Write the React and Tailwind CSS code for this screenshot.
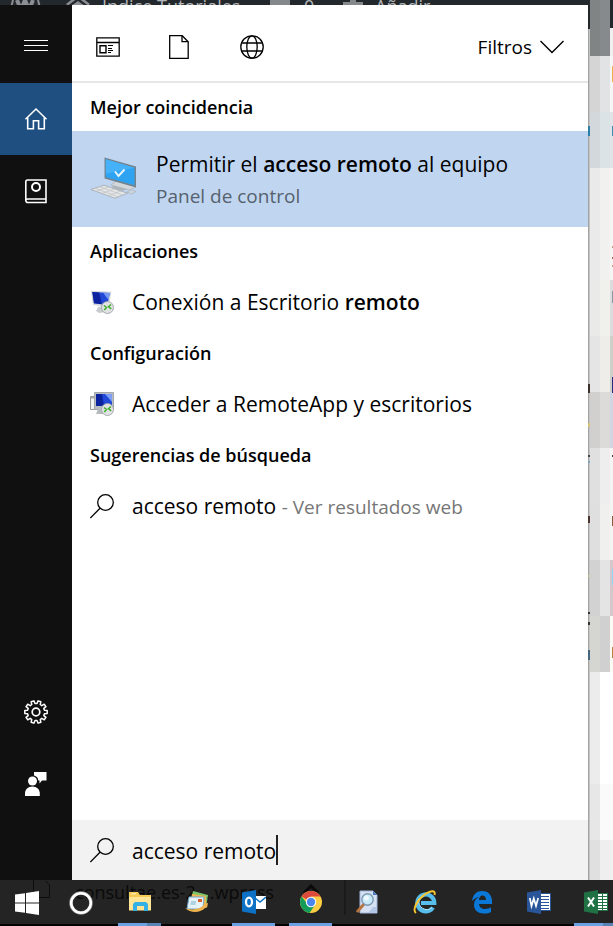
import React, { useState } from "react";

function MenuIcon() {
  return (
    <svg width="24" height="12" viewBox="0 0 24 12" fill="#fff" aria-hidden="true">
      <rect y="0" width="24" height="1" />
      <rect y="5" width="24" height="1" />
      <rect y="10" width="24" height="1" />
    </svg>
  );
}

function HomeIcon() {
  return (
    <svg width="24" height="24" viewBox="0 0 24 24" fill="none" stroke="#fff" strokeWidth="1.6" aria-hidden="true">
      <path d="M1.5 12.2 12 2l10.500 10.200" />
      <path d="M3.700 10.500v11.300h5.700v-8h5.200v8h5.700V10.500" />
    </svg>
  );
}

function NotebookIcon() {
  return (
    <svg width="24" height="26" viewBox="0 0 24 26" fill="none" stroke="#fff" strokeWidth="1.6" aria-hidden="true">
      <path d="M22 21V2H3.500C2.500 2 1.800 2.700 1.800 3.700v18.500c0 1.200.9 2.300 2.200 2.300h18V21H3.800c-1.200 0-2 .6-2 1.500" />
      <circle cx="12" cy="9" r="4" strokeWidth="2" />
    </svg>
  );
}

function gearPath() {
  const teeth = 10;
  const points = [];
  for (let i = 0; i < teeth; i++) {
    const c = (i + 0.5) * ((Math.PI * 2) / teeth);
    [
      [-0.2, 8.6],
      [-0.13, 11.3],
      [0.13, 11.3],
      [0.2, 8.6],
    ].forEach(([a, r]) => {
      points.push(`${(12 + r * Math.sin(c + a)).toFixed(2)} ${(12 - r * Math.cos(c + a)).toFixed(2)}`);
    });
  }
  return `M${points.join("L")}Z`;
}

function GearIcon() {
  return (
    <svg width="24" height="24" viewBox="0 0 24 24" fill="none" stroke="#fff" strokeWidth="1.500" strokeLinejoin="round" aria-hidden="true">
      <path d={gearPath()} />
      <circle cx="12" cy="12" r="3.800" strokeWidth="1.700" />
    </svg>
  );
}

function FeedbackIcon() {
  return (
    <svg width="24" height="26" viewBox="0 0 24 26" fill="#fff" aria-hidden="true">
      <path d="M10 1h12.500v8.500h-4.500L15.500 12.500V9.500h-1.200A5.500 5.500 0 0 0 10 4.500Z" />
      <circle cx="8.500" cy="10" r="4.500" />
      <path d="M1 25v-2.500C1 18.500 4 15.500 8.400 15.500s7.400 3 7.400 7V25Z" />
    </svg>
  );
}

function AppsIcon() {
  return (
    <svg width="24" height="20" viewBox="0 0 24 20" fill="none" stroke="#000" aria-hidden="true">
      <path d="M.8.8h22.400v18.400H.8ZM.8 5.500h22.400" strokeWidth="1.300" />
      <path d="M4 8.700h6v7H4Z" strokeWidth="1.400" />
      <path d="M12 8.500h5M12 11.500h4M12 13.500h5M12 15.500h3" />
    </svg>
  );
}

function PageIcon() {
  return (
    <svg width="20" height="24" viewBox="0 0 20 24" fill="none" stroke="#000" strokeWidth="1.300" aria-hidden="true">
      <path d="M.7.7h12.500l6 6v16.600H.7Z" />
      <path d="M13 .7v6h6" />
    </svg>
  );
}

function GlobeIcon() {
  return (
    <svg width="24" height="24" viewBox="0 0 24 24" fill="none" stroke="#000" strokeWidth="1.300" aria-hidden="true">
      <circle cx="12" cy="12" r="11.200" />
      <ellipse cx="12" cy="12" rx="5.200" ry="11.200" />
      <path d="M1.800 8h20.400M1.800 16h20.400" />
    </svg>
  );
}

function ChevronIcon() {
  return (
    <svg width="24" height="14" viewBox="0 0 24 14" fill="none" stroke="#000" strokeWidth="1.400" aria-hidden="true">
      <path d="m.5 1 11.500 11.500L23.500 1" />
    </svg>
  );
}

function SearchIcon() {
  return (
    <svg className="shrink-0" width="24" height="25" viewBox="0 0 24 25" fill="none" stroke="#000" strokeWidth="1.300" aria-hidden="true">
      <circle cx="15.500" cy="8.500" r="7.800" />
      <path d="m10 14.200-9.700 9.900" />
    </svg>
  );
}

function RemotePcIcon() {
  return (
    <svg width="48" height="44" viewBox="0 0 48 44" aria-hidden="true">
      <path d="m24 25 8 2 1 3 7 1-8 3-10-3Z" fill="#aeb7be" />
      <path d="m21 28 18 5 7-3-2-1-18-5Z" fill="#d4d8db" stroke="#98a1a8" strokeWidth=".5" />
      <path d="m14.500.500 31.500 9v21l-31.500-9Z" fill="#74838e" />
      <path d="m15.800 2.300 28.700 8.400v17.600l-28.700-8Z" fill="#2ea3f2" />
      <path d="m15.800 2.300 28.700 8.400-28.700 6Z" fill="#45b1f9" />
      <path d="m25 14.500 3.500 4.500 6-6.500" fill="none" stroke="#e8f6ff" strokeWidth="1.900" />
      <path d="m.8 32.500 13.200-4.300 23.500 8-12.500 5Z" fill="#e4e5e6" stroke="#9aa1a6" strokeWidth=".7" />
      <path d="m5 31.200 23 8.500M9.500 29.700l23 8.300M6 34.300l13-4.500M12 36.500l13-4.800M18 38.700l13-4.800" fill="none" stroke="#bdc1c4" strokeWidth=".7" />
      <path d="m37 35 4.500-2.300 4.500 1.800-4.500 2.500Z" fill="#cfd6db" stroke="#9aa5ad" strokeWidth=".5" />
    </svg>
  );
}

function RdpBadge() {
  return (
    <>
      <circle cx="17.500" cy="17.500" r="6" fill="#e0e2e4" stroke="#a0a4a8" strokeWidth=".9" />
      <path d="m14 15.500 2.500 2-2.300 2.500M21 14.500l-2.500 2.300 2.700 2" fill="none" stroke="#3fae2a" strokeWidth="1.500" />
    </>
  );
}

function RdpIcon() {
  return (
    <svg width="24" height="24" viewBox="0 0 24 24" aria-hidden="true">
      <path d="m8 17 6-1 2 6-7 1-3-2Z" fill="#c8cdd2" />
      <path d="m1 .8 20.500 1L18.500 17 3 15Z" fill="#d3d7dc" />
      <path d="m2.300 2 17.600 1-2.600 12L4 13.300Z" fill="#2148d6" />
      <path d="m2.300 2 7 .4 2.500 11.900L4 13.300Z" fill="#0c229e" />
      <path d="m13 2.600 6.900.4-1.500 7Z" fill="#7699f2" />
      <RdpBadge />
    </svg>
  );
}

function RemoteAppIcon() {
  return (
    <svg width="24" height="24" viewBox="0 0 24 24" aria-hidden="true">
      <path d="M.5 4.500h8v13h-8Z" fill="#f4f4f4" stroke="#9b9b9b" />
      <path d="M.5 4.500h5v2h-5Z" fill="#aaa" />
      <path d="M4.500.500h19v17h-19Z" fill="#b9bdc2" stroke="#a4a8ac" />
      <path d="M6 2h16v12H6Z" fill="#2148d6" />
      <path d="M6 2h6l2 12H6Z" fill="#0c229e" />
      <path d="M15 2h7v8Z" fill="#7d9ff5" />
      <path d="m8 17-2 5h9v-5Z" fill="#b5babe" />
      <RdpBadge />
    </svg>
  );
}

const taskIcons = {
  start: (
    <svg width="24" height="24" viewBox="0 0 24 24" fill="#fff">
      <path d="m0 3.500 10-1.300v9.300H0ZM11 2l13-2v11.500H11ZM0 12.500h10v9.300L0 20.500ZM11 12.500h13V24l-13-2Z" />
    </svg>
  ),
  cortana: (
    <svg width="24" height="24" viewBox="0 0 24 24" fill="none">
      <circle cx="12" cy="12" r="10" stroke="#8e8e8e" strokeWidth="3.600" />
      <circle cx="12" cy="12" r="9.800" stroke="#fff" strokeWidth="2.500" />
    </svg>
  ),
  explorer: (
    <svg width="24" height="22" viewBox="0 0 24 22">
      <path d="M1 1h9l2 3h11v15H1Z" fill="#f3cb55" />
      <path d="M1 6h22v13.500H1Z" fill="#ffe595" />
      <path d="M3 2.300h5v1H3Z" fill="#fff3c4" />
      <path d="M5 20v-7l2-2h11l2 2v7h-4v-5H9v5Z" fill="#33b1e7" />
    </svg>
  ),
  mail: (
    <svg width="24" height="24" viewBox="0 0 24 24">
      <path d="m8 1 15 4-2 13L5 14Z" fill="#7ec46b" />
      <path d="m7 4 14 2v12H5Z" fill="#f1b654" />
      <path d="M4 7h15l-1 12H2Z" fill="#e4f2fa" stroke="#6ea8cf" />
      <path d="M13 9h4v3h-4Z" fill="#d7622d" />
      <path d="M6 12h5M5.500 14h5" stroke="#7fb0d0" />
      <path d="M0 18c7 3 15 1 19-3l-1-1 5-1-1 5-1-1c-5 6-15 7-21 1Z" fill="#eeb14c" />
    </svg>
  ),
  outlook: (
    <svg width="24" height="24" viewBox="0 0 24 24">
      <path d="M13 6h11v13H13Z" fill="#fff" />
      <path d="m13 8 5 4 6-5" fill="none" stroke="#0d72c6" strokeWidth="1.500" />
      <path d="M0 2.500 14 0v24L0 21.500Z" fill="#0d72c6" />
      <ellipse cx="7" cy="12" rx="3" ry="4.300" fill="none" stroke="#fff" strokeWidth="2.300" />
    </svg>
  ),
  chrome: (
    <svg width="24" height="24" viewBox="0 0 24 24">
      <circle cx="12" cy="12" r="11" fill="#ffcd42" />
      <path d="M12 12 2.500 6.500A11 11 0 0 1 21.500 6.500H12Z" fill="#db4a3c" />
      <path d="M2.500 6.500a11 11 0 0 0 8 16.400L16 15l-4-3-5 0Z" fill="#149c5a" />
      <circle cx="12" cy="12" r="5.200" fill="#fff" />
      <circle cx="12" cy="12" r="4.200" fill="#4a86ec" />
    </svg>
  ),
  finder: (
    <svg width="24" height="24" viewBox="0 0 24 24">
      <path d="M4 1h13l4 4v18H4Z" fill="#d6e1f3" stroke="#9eb4d8" />
      <path d="M17 1v4h4Z" fill="#4575bd" />
      <path d="M17 17h4v6h-9Z" fill="#b4c6e6" />
      <path d="m8 14-7 8" stroke="#b8743e" strokeWidth="2.800" />
      <circle cx="11.500" cy="9.500" r="5.700" fill="#c9eaf8" stroke="#7d98b0" strokeWidth="1.400" />
      <circle cx="10.500" cy="8" r="2.500" fill="#eefaff" />
    </svg>
  ),
  ie: (
    <svg width="24" height="24" viewBox="0 0 24 24" fill="none">
      <path d="M20 17.500A8.500 8.500 0 1 1 21.300 13H8" stroke="#56bdec" strokeWidth="4.200" />
      <path d="M19 17.500a8 8 0 0 1-13-8" stroke="#b4e7fc" strokeWidth="1" />
      <path d="M3 23C-1 20 4 10 11 5S23 0 21.500 5" stroke="#fbc72f" strokeWidth="1.900" />
    </svg>
  ),
  edge: (
    <svg width="24" height="24" viewBox="0 0 24 24">
      <path d="M2 11C3 4 7 1 12 1c7 0 10 5 10 10v3H9c0 3 3 5 6 5 2.500 0 4.500-.7 6-1.700V22c-2 1-4 1.500-7 1.500-6 0-10-3.500-10-8.500 0-4 2-6.500 5-8-3 .5-5 2-7 4ZM9 10h7c0-3-1.500-4.500-3.500-4.500S9 7.500 9 10Z" fill="#0b78d7" />
    </svg>
  ),
  word: (
    <svg width="24" height="24" viewBox="0 0 24 24">
      <path d="M13 3.500h10.500v17H13Z" fill="#fff" stroke="#2a5699" />
      <path d="M14 6.500h8M14 9.500h8M14 12.500h8M14 15.500h8M14 18.500h8" stroke="#2a5699" />
      <path d="M0 2.500 14 0v24L0 21.500Z" fill="#2a5699" />
      <path d="m2.800 8 1.700 8 2.300-7.500L9 16l2.200-8" fill="none" stroke="#fff" strokeWidth="1.700" />
    </svg>
  ),
  excel: (
    <svg width="24" height="24" viewBox="0 0 24 24">
      <path d="M13 3.500h10.500v17H13Z" fill="#fff" stroke="#207245" />
      <path d="M14 6.500h9M14 9.500h9M14 12.500h9M14 15.500h9M14 18.500h9M18.500 4v16" stroke="#207245" />
      <path d="M0 2.500 14 0v24L0 21.500Z" fill="#207245" />
      <path d="m4 7.500 6 9M10 7.500l-6 9" fill="none" stroke="#fff" strokeWidth="2" />
    </svg>
  ),
};

const pinned = [
  { id: "explorer", label: "Explorador de archivos", state: "stacked" },
  { id: "mail", label: "Correo" },
  { id: "outlook", label: "Outlook", state: "open" },
  { id: "chrome", label: "Chrome", state: "open" },
  { id: "finder", label: "Buscar archivos" },
  { id: "ie", label: "Internet Explorer" },
  { id: "edge", label: "Edge" },
  { id: "word", label: "Word" },
  { id: "excel", label: "Excel", state: "stacked" },
];

function TaskButton({ item }) {
  return (
    <button type="button" aria-label={item.label} className="flex w-[57px] shrink-0 flex-col">
      <span className="flex w-full flex-1 items-center justify-center">{taskIcons[item.id]}</span>
      <span className="flex h-[3px] w-full justify-center">
        {item.state === "open" && <span className="w-[43px] bg-[#6ba1e2]" />}
        {item.state === "stacked" && (
          <>
            <span className="w-[29px] bg-[#6ba1e2]" />
            <span className="w-[14px] bg-[#5783b5]" />
          </>
        )}
      </span>
    </button>
  );
}

function RailButton({ label, active, tall, children }) {
  return (
    <button
      type="button"
      aria-label={label}
      className={`flex w-full items-center justify-center ${tall ? "h-[78px] pt-1" : "h-[72px]"} ${active ? "bg-[#1f4e80]" : ""}`}
    >
      {children}
    </button>
  );
}

function SectionTitle({ children }) {
  return <h2 className="flex h-12 shrink-0 items-center px-[18px] text-[18px] leading-6 font-semibold">{children}</h2>;
}

function ResultRow({ icon, children }) {
  return (
    <a href="#resultado" className="flex h-[54px] shrink-0 items-center gap-[18px] px-[18px] text-[21px] leading-7 whitespace-nowrap">
      <span className="w-6 shrink-0">{icon}</span>
      <span>{children}</span>
    </a>
  );
}

const backdrop = [
  ["h-7", "bg-[#808485]", "bg-[#878a8c]", "bg-[#23282d]"],
  ["h-7", "bg-[#808485]", "bg-[#878a8c]", "bg-[#f0f0f0]"],
  ["h-14", "bg-[#d5d5d5]", "bg-[#e1e3e5]", "bg-[#f6f6f6]"],
  ["h-14", "bg-[#d2d8dc]", "bg-[#dbe3e6]", "bg-[#e0e4e8]"],
  ["h-28", "bg-[#eaeaea]", "bg-[#f1f1f0]", "bg-[#f5f5f5]"],
  ["h-14", "bg-[#eaeae9]", "bg-[#f0f0ed]", "bg-[#dcdcde]"],
  ["h-14", "bg-[#e5e5e5]", "bg-[#eeedea]", "bg-[#cfcfca]"],
  ["h-14", "bg-[#d1d0ce]", "bg-[#dcdbd9]", "bg-[#d2d6e2]"],
  ["h-14", "bg-[#e0e0e1]", "bg-[#eeeeee]", "bg-[#f4f4f4]"],
  ["h-14", "bg-[#dfdfdf]", "bg-[#f0f0ee]", "bg-[#f4f4f4]"],
  ["h-14", "bg-[#d2d2d2]", "bg-[#e5e4e5]", "bg-[#d5c8cc]"],
  ["h-14", "bg-[#d5d5d2]", "bg-[#d0d0d0]", "bg-[#fbfbf6]"],
  ["h-28", "bg-[#ececec]", "bg-white", "bg-white"],
  ["h-14", "bg-[#e7e7e7]", "bg-[#fafafa]", "bg-[#fafafa]"],
  ["flex-1", "bg-[#e0e0e0]", "bg-[#efefef]", "bg-[#f0f0f0]"],
];

const leftFragments = [
  "h-[29px] bg-[#23282d]",
  "mt-[97px] h-[10px] bg-[#2a7fa8]",
  "mt-[248px] h-[9px] bg-[#3a302c]",
  "mt-[30px] h-[4px] bg-[#d8c27a]",
  "mt-[28px] h-[2px] bg-[#444444]",
  "mt-[4px] h-[2px] bg-[#7fa3bd]",
  "mt-[53px] h-[7px] bg-[#4b3530]",
  "mt-[52px] h-[2px] bg-[#c5cc9a]",
  "mt-[35px] h-[2px] bg-[#333333]",
  "mt-[8px] h-[3px] bg-[#333333]",
  "mt-[25px] h-[10px] bg-[#47677f]",
];

const rightFragments = [
  "mt-[66px] h-[16px] bg-[#f0ad4e]",
  "mt-[44px] h-[10px] bg-[#3a8db5]",
  "mt-[110px] h-[2px] bg-[#c9987a]",
  "mt-[9px] h-[2px] bg-[#b0605a]",
  "mt-[6px] h-[2px] bg-[#c9987a]",
  "mt-[24px] h-[12px] bg-[#8a97a5]",
  "mt-[74px] h-[16px] bg-[#2b2e83]",
  "mt-[62px] h-[2px] bg-[#444444]",
  "mt-[59px] h-[10px] bg-[#8a5a3a]",
  "mt-[43px] h-[16px] bg-[#8ed6f5]",
  "mt-[62px] h-[11px] bg-[#b8863a]",
];

export default function App() {
  const [query, setQuery] = useState("acceso remoto");
  return (
    <div className="flex h-screen min-h-[700px] flex-col overflow-hidden bg-white font-['Open_Sans','Noto_Sans',sans-serif] text-black">
      <div className="flex min-h-0 flex-1">
        <div className="flex min-w-0 flex-1 flex-col">
          <div className="flex h-[5px] shrink-0 overflow-hidden bg-[#23282d] text-[18px] leading-5 text-[#b4b7ba]" aria-hidden="true">
            <svg className="ml-2 shrink-0" width="34" height="20" viewBox="0 0 34 20" fill="none" stroke="#8b8f93">
              <path d="M5 0 3 8M30 0l2 8" strokeWidth="2" />
              <path d="m9 0 4 10 4-10 4 10 4-10" strokeWidth="4" />
            </svg>
            <svg className="ml-6 shrink-0" width="24" height="20" viewBox="0 0 24 20" fill="#8b8f93">
              <path d="m0 4 9-7h6l9 7-2 1.500L12-2 2 5.500ZM5 6l7-5 7 5Z" />
            </svg>
            <span className="-mt-1 ml-3 w-[168px] shrink-0 whitespace-nowrap">Índice Tutoriales</span>
            <span className="h-4 w-5 shrink-0 bg-[#85898c]" />
            <span className="-mt-1 ml-[14px] w-6 shrink-0">0</span>
            <svg className="ml-[15px] shrink-0" width="20" height="10" viewBox="0 0 20 10" fill="#85898c">
              <path d="M7 0h6v2h7v6H0V2h7Z" />
            </svg>
            <span className="-mt-1 ml-3 whitespace-nowrap">Añadir</span>
          </div>

          <div className="flex min-h-0 flex-1">
            <nav aria-label="Cortana" className="flex w-[72px] shrink-0 flex-col bg-[#101010] pb-[60px]">
              <RailButton label="Menú" tall><MenuIcon /></RailButton>
              <RailButton label="Inicio" active><HomeIcon /></RailButton>
              <RailButton label="Cuaderno"><NotebookIcon /></RailButton>
              <div className="flex-1" />
              <RailButton label="Configuración"><GearIcon /></RailButton>
              <RailButton label="Comentarios"><FeedbackIcon /></RailButton>
            </nav>

            <main className="flex min-w-0 flex-1 flex-col bg-white">
              <header className="flex h-[78px] shrink-0 items-center border-b-2 border-[#e6e6e6] px-6 pt-2">
                <button type="button" aria-label="Aplicaciones" className="w-[72px]"><AppsIcon /></button>
                <button type="button" aria-label="Documentos" className="w-[72px] pl-[1px]"><PageIcon /></button>
                <button type="button" aria-label="Web" className="w-[72px]"><GlobeIcon /></button>
                <button type="button" className="ml-auto flex items-center gap-2 text-[19px] leading-6">
                  Filtros
                  <ChevronIcon />
                </button>
              </header>

              <SectionTitle>Mejor coincidencia</SectionTitle>
              <a href="#resultado" className="flex h-24 shrink-0 items-center gap-[18px] bg-[#c0d6f0] px-[18px] whitespace-nowrap">
                <RemotePcIcon />
                <span className="flex flex-col pt-[2px]">
                  <span className="text-[21px] leading-8">Permitir el <b className="font-semibold">acceso remoto</b> al equipo</span>
                  <span className="text-[19px] leading-8 text-[#56616d]">Panel de control</span>
                </span>
              </a>

              <SectionTitle>Aplicaciones</SectionTitle>
              <ResultRow icon={<RdpIcon />}>Conexión a Escritorio <b className="font-semibold">remoto</b></ResultRow>
              <SectionTitle>Configuración</SectionTitle>
              <ResultRow icon={<RemoteAppIcon />}>Acceder a RemoteApp y escritorios</ResultRow>
              <SectionTitle>Sugerencias de búsqueda</SectionTitle>
              <ResultRow icon={<SearchIcon />}>
                acceso remoto <span className="text-[19px] text-[#767676]">- Ver resultados web</span>
              </ResultRow>

              <div className="flex-1" />
              <label className="flex h-[60px] shrink-0 items-center gap-[18px] bg-[#f2f2f2] px-[18px]">
                <SearchIcon />
                <span className="flex items-center">
                  <input
                    type="text"
                    aria-label="Buscar"
                    value={query}
                    onChange={(e) => setQuery(e.target.value)}
                    className="field-sizing-content bg-transparent pt-[2px] text-[21px] leading-8 caret-transparent outline-none"
                  />
                  <span className="h-[30px] w-[2px] bg-[#222222]" />
                </span>
              </label>
            </main>
          </div>
        </div>

        <aside aria-hidden="true" className="relative flex w-[25px] shrink-0 flex-col">
          {backdrop.map(([h, a, b, c], i) => (
            <div key={i} className={`flex shrink-0 ${h}`}>
              <span className="w-px bg-[#a3a3a3]" />
              <span className="w-px bg-[#c4c4c4]" />
              <span className={`w-[10px] ${a}`} />
              <span className={`w-[10px] ${b}`} />
              <span className={`flex-1 ${c}`} />
            </div>
          ))}
          <div className="absolute inset-y-0 left-0 flex w-[2px] flex-col overflow-hidden">
            {leftFragments.map((f, i) => (
              <span key={i} className={`shrink-0 ${f}`} />
            ))}
          </div>
          <div className="absolute inset-y-0 right-0 flex w-px flex-col overflow-hidden">
            {rightFragments.map((f, i) => (
              <span key={i} className={`shrink-0 ${f}`} />
            ))}
          </div>
        </aside>
      </div>

      <footer className="relative flex h-[46px] shrink-0 overflow-hidden bg-[#242424]">
        <div aria-hidden="true" className="absolute inset-0">
          <div className="absolute inset-x-0 bottom-0 h-[2px] bg-black" />
          <svg className="absolute top-0 left-8" width="20" height="20" viewBox="0 0 20 20" fill="none" stroke="#0d0d0d">
            <path d="M1.500 0v17.500h16V5l-4-4" />
          </svg>
          <span className="absolute -top-[2px] left-[75px] text-[18px] leading-7 whitespace-nowrap text-[#0a0a0a]">consultae.es-2 ...wpress</span>
          <svg className="absolute top-1 left-[303px]" width="16" height="12" viewBox="0 0 16 12" fill="none" stroke="#0a0a0a" strokeWidth="3">
            <path d="m1 9 7-7 7 7" />
          </svg>
          <span className="absolute top-0 left-[344px] h-[35px] w-[2px] bg-[#1a1a1a]" />
        </div>
        <div className="relative flex min-w-0 flex-1">
          <button type="button" aria-label="Inicio" className="flex w-[54px] shrink-0 items-center justify-center">{taskIcons.start}</button>
          <button type="button" aria-label="Cortana" className="mr-[3px] flex w-[54px] shrink-0 items-center justify-center">{taskIcons.cortana}</button>
          {pinned.map((item) => (
            <TaskButton key={item.id} item={item} />
          ))}
        </div>
      </footer>
    </div>
  );
}
